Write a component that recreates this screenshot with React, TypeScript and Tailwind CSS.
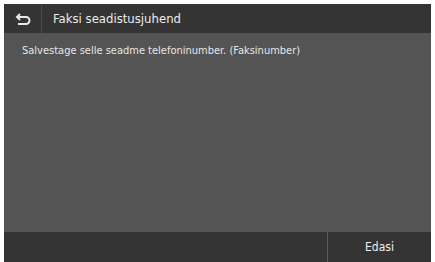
import React from "react";

export default function App() {
  const font = { fontFamily: '"DejaVu Sans Condensed", "DejaVu Sans", sans-serif' };
  return (
    <div className="w-[435px] h-[262px] bg-white pt-[4px] pl-[4px] pr-[4px]" style={font}>
      <div className="flex h-full flex-col bg-[#545454]">
        <div className="flex h-[29px] items-center bg-[#343434]">
          <div className="flex h-full w-[38px] items-center justify-center border-r border-[#4a4a4a]">
            <svg width="16" height="12" viewBox="0 0 16 12" fill="none" stroke="#e8e8e8" strokeWidth="2">
              <path d="M2 4 H11 a3.5 3.5 0 0 1 0 7 H3" />
              <path d="M5 1 L2 4 L5 7" />
            </svg>
          </div>
          <span className="pl-[11px] text-[13px] text-[#ececec]">Faksi seadistusjuhend</span>
        </div>
        <div className="flex-1 px-[18px] pt-[10px] text-[11px] text-[#e6e6e6]">
          Salvestage selle seadme telefoninumber. (Faksinumber)
        </div>
        <div className="flex h-[30px] bg-[#343434]">
          <div className="flex-1" />
          <div className="flex w-[104px] items-center justify-center border-l border-[#5a5a5a] text-[12px] text-[#f0f0f0]">
            Edasi
          </div>
        </div>
      </div>
    </div>
  );
}
